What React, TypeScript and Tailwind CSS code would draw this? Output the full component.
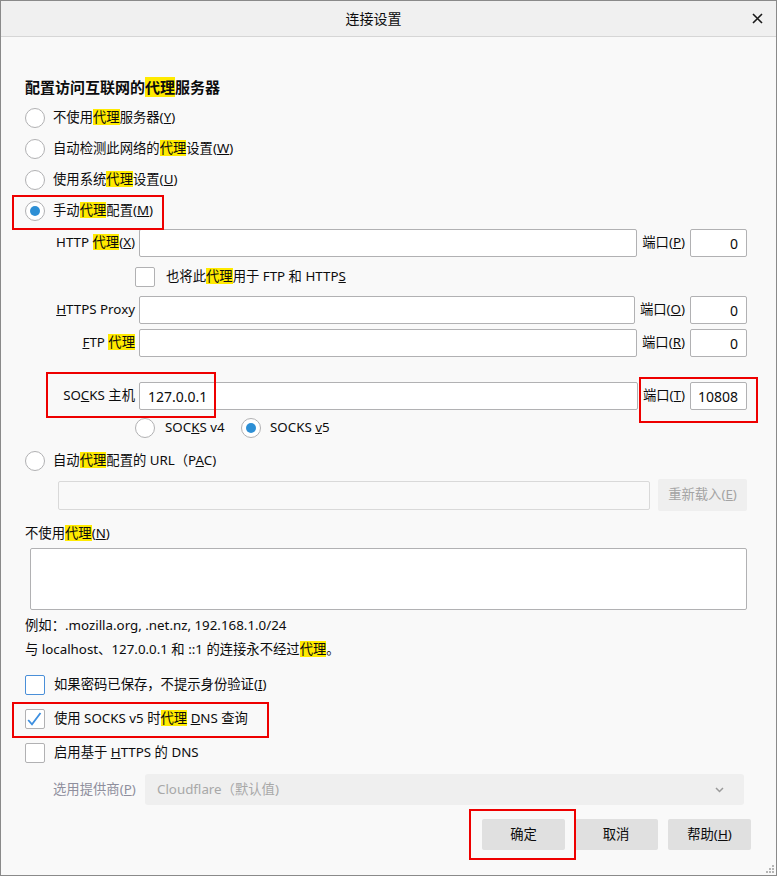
import React from 'react';

const HL = ({ children, big }: { children: React.ReactNode; big?: boolean }) => (
  <span className={big ? 'inline-block bg-[#ffea00] leading-[20px]' : 'inline-block bg-[#ffea00] leading-[16px]'}>{children}</span>
);

const Radio = ({ checked }: { checked?: boolean }) => (
  <span className="flex h-[20px] w-[20px] shrink-0 items-center justify-center rounded-full border border-[#b1b1b3] bg-white">
    {checked && <span className="h-[10px] w-[10px] rounded-full bg-[#2d8fd5]" />}
  </span>
);

const Check = ({ checked, focus }: { checked?: boolean; focus?: boolean }) => (
  <span
    className={
      focus
        ? 'flex h-[20px] w-[20px] shrink-0 items-center justify-center rounded-[2px] border border-[#4a8fd8] bg-white'
        : 'flex h-[20px] w-[20px] shrink-0 items-center justify-center rounded-[2px] border border-[#b1b1b3] bg-white'
    }
  >
    {checked && (
      <svg width="18" height="18" viewBox="0 0 18 18">
        <path d="M2.2 10 L6 14.3 L14.5 3" fill="none" stroke="#3d8fe0" strokeWidth="1.8" />
      </svg>
    )}
  </span>
);

const Field = ({ value, className }: { value?: string; className: string }) => (
  <div className={className}>{value}</div>
);

export default function App() {
  return (
    <div className="relative h-[876px] w-[777px] overflow-hidden border border-[#8a8a8a] bg-[#f9f9f9] font-[family-name:'Noto_Sans','Noto_Sans_CJK_SC',sans-serif] text-[13.33px] text-[#0c0c0d]">
      {/* title bar */}
      <div className="flex h-[36px] border-b border-[#d6d6d6] bg-[#f0f0f0]">
        <div className="flex flex-1 items-center justify-center text-[14px]">连接设置</div>
        <div className="flex w-[30px] items-center pl-[6px]">
          <svg width="11" height="11" viewBox="0 0 11 11">
            <path d="M1 1 L10 10 M10 1 L1 10" stroke="#1a1a1a" strokeWidth="1.6" />
          </svg>
        </div>
      </div>

      <div className="flex flex-col pl-[24px] pr-[29px]">
        <div className="mt-[35px] flex h-[30px] items-center text-[15px] font-bold">
          配置访问互联网的<HL big>代理</HL>服务器
        </div>

        <div className="flex h-[31px] items-center gap-[8px]">
          <Radio />
          <span>
            不使用<HL>代理</HL>服务器(<u>Y</u>)
          </span>
        </div>
        <div className="flex h-[31px] items-center gap-[8px]">
          <Radio />
          <span>
            自动检测此网络的<HL>代理</HL>设置(<u>W</u>)
          </span>
        </div>
        <div className="flex h-[31px] items-center gap-[8px]">
          <Radio />
          <span>
            使用系统<HL>代理</HL>设置(<u>U</u>)
          </span>
        </div>
        <div className="flex h-[31px] items-center gap-[8px]">
          <Radio checked />
          <span>
            手动<HL>代理</HL>配置(<u>M</u>)
          </span>
        </div>

        {/* HTTP */}
        <div className="mt-[3px] flex h-[28px] items-center">
          <div className="ml-[28px] w-[82px] whitespace-nowrap text-right">
            HTTP <HL>代理</HL>(<u>X</u>)
          </div>
          <Field className="ml-[4px] h-[28px] flex-1 rounded-[2px] border border-[#b1b1b3] bg-white" />
          <span className="ml-[5px] whitespace-nowrap">
            端口(<u>P</u>)
          </span>
          <Field
            value="0"
            className="ml-[5px] flex h-[28px] w-[57px] items-center justify-end rounded-[2px] border border-[#b1b1b3] bg-white pr-[8px] text-[14px]"
          />
        </div>

        <div className="flex h-[39px] items-center pl-[110px]">
          <Check />
          <span className="ml-[11px]">
            也将此<HL>代理</HL>用于 FTP 和 HTTP<u>S</u>
          </span>
        </div>

        {/* HTTPS */}
        <div className="flex h-[28px] items-center">
          <div className="ml-[28px] w-[82px] whitespace-nowrap text-right">
            <u>H</u>TTPS Proxy
          </div>
          <Field className="ml-[4px] h-[28px] flex-1 rounded-[2px] border border-[#b1b1b3] bg-white" />
          <span className="ml-[5px] whitespace-nowrap">
            端口(<u>O</u>)
          </span>
          <Field
            value="0"
            className="ml-[5px] flex h-[28px] w-[57px] items-center justify-end rounded-[2px] border border-[#b1b1b3] bg-white pr-[8px] text-[14px]"
          />
        </div>

        {/* FTP */}
        <div className="mt-[5px] flex h-[28px] items-center">
          <div className="ml-[28px] w-[82px] whitespace-nowrap text-right">
            <u>F</u>TP <HL>代理</HL>
          </div>
          <Field className="ml-[4px] h-[28px] flex-1 rounded-[2px] border border-[#b1b1b3] bg-white" />
          <span className="ml-[5px] whitespace-nowrap">
            端口(<u>R</u>)
          </span>
          <Field
            value="0"
            className="ml-[5px] flex h-[28px] w-[57px] items-center justify-end rounded-[2px] border border-[#b1b1b3] bg-white pr-[8px] text-[14px]"
          />
        </div>

        {/* SOCKS */}
        <div className="mt-[25px] flex h-[28px] items-center">
          <div className="ml-[28px] w-[82px] whitespace-nowrap text-right">
            SO<u>C</u>KS 主机
          </div>
          <Field
            value="127.0.0.1"
            className="ml-[4px] flex h-[28px] flex-1 items-center rounded-[2px] border border-[#b1b1b3] bg-white pl-[8px] text-[14px]"
          />
          <span className="ml-[5px] whitespace-nowrap">
            端口(<u>T</u>)
          </span>
          <Field
            value="10808"
            className="ml-[5px] flex h-[28px] w-[57px] items-center justify-end rounded-[2px] border border-[#b1b1b3] bg-white pr-[8px] text-[14px]"
          />
        </div>

        <div className="flex h-[36px] items-center pl-[110px]">
          <div className="flex w-[106px] items-center gap-[10px]">
            <Radio />
            <span>
              SOC<u>K</u>S v4
            </span>
          </div>
          <div className="flex items-center gap-[9px]">
            <Radio checked />
            <span>
              SOCKS <u>v</u>5
            </span>
          </div>
        </div>

        <div className="flex h-[30px] items-center gap-[8px]">
          <Radio />
          <span>
            自动<HL>代理</HL>配置的 URL（P<u>A</u>C)
          </span>
        </div>

        <div className="mt-[3px] flex h-[32px] items-center">
          <div className="ml-[33px] h-[29px] flex-1 rounded-[2px] border border-[#d9d9d9] bg-[#f9f9f9]" />
          <div className="ml-[8px] flex h-[32px] w-[89px] items-center justify-center rounded-[2px] bg-[#efefef] text-[#a3a3a3]">
            重新载入(<u>E</u>)
          </div>
        </div>

        <div className="mt-[11px] flex h-[24px] items-center">
          <span>
            不使用<HL>代理</HL>(<u>N</u>)
          </span>
        </div>
        <div className="ml-[5px] mt-[2px] h-[62px] rounded-[2px] border border-[#b1b1b3] bg-white" />

        <div className="mt-[4px] flex h-[24px] items-center">例如：.mozilla.org, .net.nz, 192.168.1.0/24</div>
        <div className="flex h-[24px] items-center">
          <span>
            与 localhost、127.0.0.1 和 ::1 的连接永不经过<HL>代理</HL>。
          </span>
        </div>

        <div className="mt-[6px] flex h-[34px] items-center gap-[9px]">
          <Check focus />
          <span>
            如果密码已保存，不提示身份验证(<u>I</u>)
          </span>
        </div>
        <div className="flex h-[34px] items-center gap-[9px]">
          <Check checked />
          <span>
            使用 SOCKS v5 时<HL>代理</HL> <u>D</u>NS 查询
          </span>
        </div>
        <div className="flex h-[34px] items-center gap-[9px]">
          <Check />
          <span>
            启用基于 <u>H</u>TTPS 的 DNS
          </span>
        </div>

        <div className="mt-[4px] flex h-[31px] items-center">
          <div className="ml-[28px] w-[92px] whitespace-nowrap text-[#8f8f9d]">
            选用提供商(<u>P</u>)
          </div>
          <div className="mr-[3px] flex h-[31px] flex-1 items-center justify-between rounded-[3px] bg-[#efefef] pl-[12px] pr-[20px] text-[#a8a8a8]">
            <span>Cloudflare（默认值)</span>
            <svg width="9" height="6" viewBox="0 0 9 6">
              <path d="M1 1 L4.5 4.5 L8 1" fill="none" stroke="#9a9a9a" strokeWidth="1.5" />
            </svg>
          </div>
        </div>

        <div className="mr-[-4px] mt-[14px] flex h-[31px] items-center justify-end">
          <div className="flex h-[31px] w-[83px] items-center justify-center rounded-[2px] bg-[#e0e0e0]">确定</div>
          <div className="ml-[9px] flex h-[31px] w-[84px] items-center justify-center rounded-[2px] bg-[#e0e0e0]">取消</div>
          <div className="ml-[10px] flex h-[31px] w-[83px] items-center justify-center rounded-[2px] bg-[#e0e0e0]">
            帮助(<u>H</u>)
          </div>
        </div>
      </div>

      {/* annotation boxes */}
      <div className="absolute left-[11px] top-[194px] h-[35px] w-[152px] border-2 border-[#ee0000]" />
      <div className="absolute left-[45px] top-[371px] h-[46px] w-[170px] border-2 border-[#ee0000]" />
      <div className="absolute left-[638px] top-[376px] h-[46px] w-[119px] border-2 border-[#ee0000]" />
      <div className="absolute left-[11px] top-[701px] h-[36px] w-[257px] border-2 border-[#ee0000]" />
      <div className="absolute left-[468px] top-[808px] h-[51px] w-[107px] border-2 border-[#ee0000]" />

      {/* resize grip */}
      <svg className="absolute bottom-[2px] right-[2px]" width="9" height="9" viewBox="0 0 9 9">
        <rect x="7" y="1" width="2" height="2" fill="#b5b5b5" />
        <rect x="4" y="4" width="2" height="2" fill="#b5b5b5" />
        <rect x="7" y="4" width="2" height="2" fill="#b5b5b5" />
        <rect x="1" y="7" width="2" height="2" fill="#b5b5b5" />
        <rect x="4" y="7" width="2" height="2" fill="#b5b5b5" />
        <rect x="7" y="7" width="2" height="2" fill="#b5b5b5" />
      </svg>
    </div>
  );
}
